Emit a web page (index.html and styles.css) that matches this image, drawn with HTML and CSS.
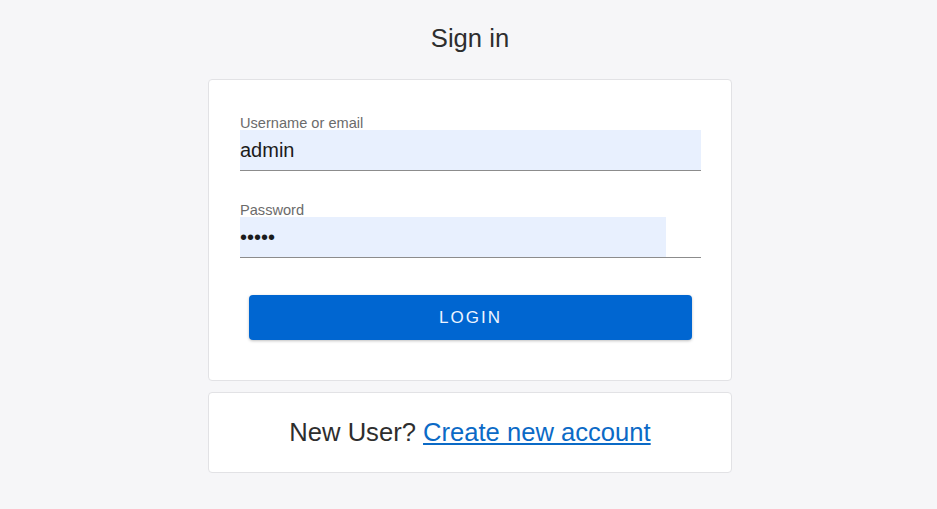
FILE: index.html
```html
<!DOCTYPE html>
<html lang="en">
<head>
    <meta charset="UTF-8">
    <meta name="viewport" content="width=device-width, initial-scale=1.0">
    <title>Sign in</title>
    <link rel="stylesheet" href="styles.css">
</head>
<body>
    <div class="login-page">
        <h1 class="page-title">Sign in</h1>

        <form class="card login-card" onsubmit="return false;">
            <label class="field-label" for="username">Username or email</label>
            <div class="field">
                <input type="text" id="username" class="field-input" value="admin">
            </div>

            <label class="field-label field-label-second" for="password">Password</label>
            <div class="field">
                <input type="password" id="password" class="field-input" value="admin">
                <span class="field-toggle"></span>
            </div>

            <button type="submit" class="login-button">Login</button>
        </form>

        <div class="card register-card">
            New User? <a href="#" class="register-link">Create new account</a>
        </div>
    </div>
</body>
</html>
```

FILE: styles.css
```css
* { margin: 0; padding: 0; box-sizing: border-box; }
html, body { width: 100%; height: 100%; overflow: hidden; }
body {
    background: #f6f6f8;
    font-family: "Liberation Sans", Arial, sans-serif;
    color: #333;
}
.login-page {
    width: 527px;
    margin: 0 auto;
    padding: 23px 0 0 3px;
}
.page-title {
    font-size: 25.6px;
    font-weight: normal;
    line-height: 30px;
    text-align: center;
    color: #2e2e2e;
    margin-bottom: 26px;
}
.card {
    background: #fff;
    border: 1px solid #e2e2e5;
    border-radius: 4px;
}
.login-card {
    display: flex;
    flex-direction: column;
    padding: 36px 30px 40px 31px;
}
.field-label {
    font-size: 14.6px;
    line-height: 14px;
    color: #6b6b6b;
}
.field-label-second { margin-top: 32px; }
.field {
    display: flex;
    border-bottom: 1px solid #8c8c8c;
}
.field-input {
    flex: 1;
    min-width: 0;
    height: 40px;
    border: none;
    outline: none;
    background: #e8f0fe;
    font-family: "Liberation Sans", Arial, sans-serif;
    font-size: 20px;
    color: #1b1b1b;
    padding: 0;
}
.field-toggle {
    width: 35px;
    background: #fff;
}
.login-button {
    margin: 37px 9px 0;
    height: 45px;
    border: none;
    border-radius: 4px;
    background: #0066d1;
    color: #eef4ff;
    font-family: "Liberation Sans", Arial, sans-serif;
    font-size: 17px;
    letter-spacing: 2px;
    text-transform: uppercase;
    box-shadow: 0 1px 3px rgba(0, 0, 0, 0.25);
    cursor: pointer;
}
.register-card {
    margin-top: 11px;
    padding: 24px 0 25px;
    font-size: 25.6px;
    line-height: 30px;
    text-align: center;
    color: #2e2e2e;
}
.register-link {
    color: #0b6ac6;
    text-decoration: underline;
}
```
